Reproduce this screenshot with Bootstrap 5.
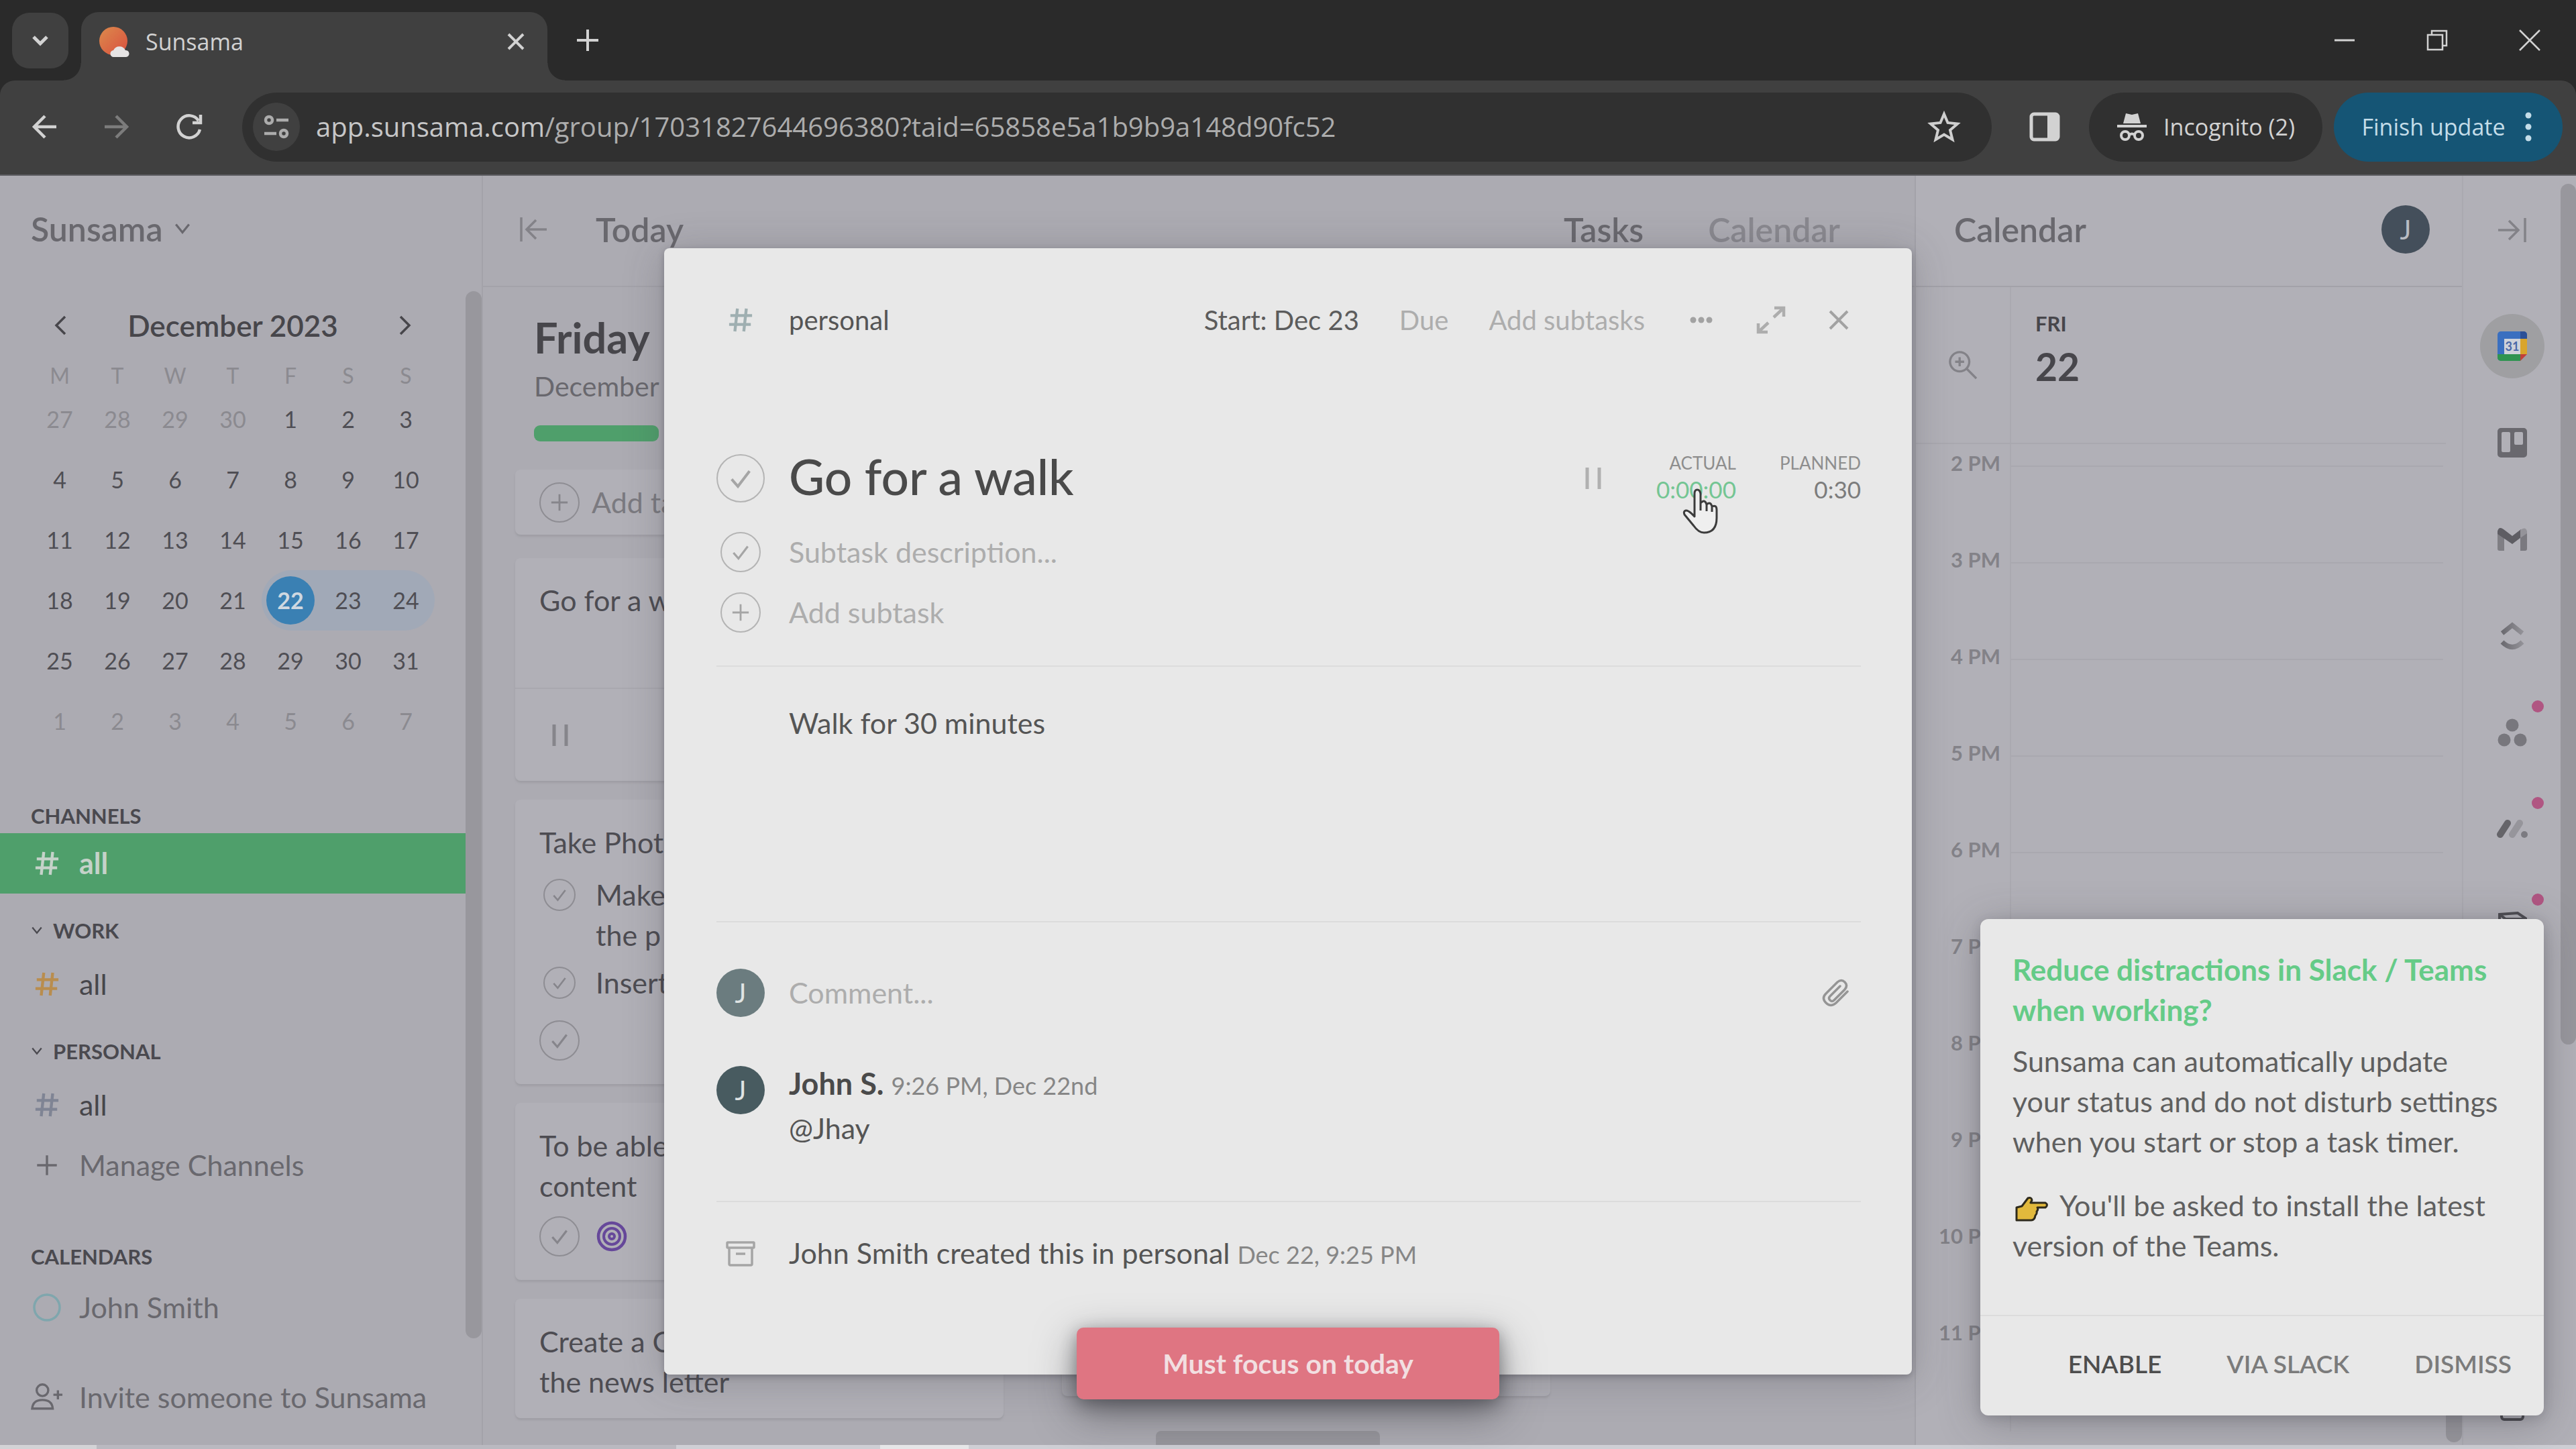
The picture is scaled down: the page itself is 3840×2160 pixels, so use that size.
<!DOCTYPE html>
<html lang="en">
<head>
<meta charset="utf-8">
<meta name="viewport" content="width=device-width, initial-scale=1">
<title>Sunsama</title>
<link href="https://cdn.jsdelivr.net/npm/bootstrap@5.3.0/dist/css/bootstrap.min.css" rel="stylesheet">
<script src="https://cdn.jsdelivr.net/npm/bootstrap@5.3.0/dist/js/bootstrap.bundle.min.js"></script>
<style>
:root{--bar:#2a2a2a;--tool:#404040;--field:#303030;--app:#acabb2;--panel:#b1b0b7;--edge:#a3a2a9;--thumb:#98979d;--ink:#47464b;--soft:#69686e;--faint:#8b8a90;--sheet:#e8e8e8;--rule:#dcdcdc;--green:#4f9f6b}
body{height:100vh;overflow:hidden;background:var(--app);font-family:Lato,"Noto Sans",sans-serif;font-size:43px;line-height:60px;color:var(--ink)}
button,input,a{font:inherit;color:inherit;text-decoration:none}
button{background:none;border:0;padding:0}
svg{display:block;flex:none}
svg:not([fill]){fill:none}
svg:not([stroke]){stroke:currentColor}
.chrome{font-family:"Open Sans","Noto Sans",sans-serif;font-size:34px;color:#d2d2d2;background:var(--bar)}
.strip{height:120px}
.tabsearch{width:84px;height:83px;border-radius:26px;background:var(--tool);margin:0 19px 0 18px}
.browsertab{width:695px;height:102px;border-radius:26px 26px 0 0;background:var(--tool);padding:0 32px 15px 26px}
.browsertab::before,.browsertab::after{content:"";position:absolute;bottom:0;width:26px;height:26px}
.browsertab::before{left:-26px;background:radial-gradient(circle at 0 0,transparent 25px,var(--tool) 26px)}
.browsertab::after{right:-26px;background:radial-gradient(circle at 100% 0,transparent 25px,var(--tool) 26px)}
.newtab{width:120px;height:120px}
.winbtn{width:138px;height:118px}
.toolbar{height:142px;background:var(--tool);border-bottom:2px solid #5d5d61;border-radius:22px 22px 0 0;padding:0 20px 2px 12px}
.toolbtn{width:108px;height:100px}
.omni{height:103px;border-radius:52px;background:var(--field);margin:0 25px;padding:0 46px 0 16px;font-size:40px;color:#acacac}
.siteinfo{width:70px;height:72px;border-radius:50%;background:var(--tool);margin-right:24px}
.chip{height:103px;border-radius:52px}
.chip-inc{width:348px;background:var(--field);margin-left:12px}
.chip-upd{width:341px;background:#155575;color:#c4dde9;margin-left:17px}
.app{min-height:0}
.desk{height:6px;background:linear-gradient(90deg,#d3d3d6 0 144px,#bab9c0 144px 1008px,#cfcfd5 1008px 1312px,#e6e6e8 1312px 1444px,#cfcfd5 1444px)}
.side{width:720px;border-right:2px solid var(--edge)}
.head50{font-size:50px;font-weight:600;color:var(--soft)}
.sidehead{height:172px;padding:0 46px 14px}
.sidebody{width:694px}
.scrollcol{width:24px;background:var(--thumb);border-radius:12px}
.month{height:101px;padding:0 80px;font-size:44px;font-weight:600}
.days{width:602px;margin-left:46px;table-layout:fixed;text-align:center;font-size:34px}
.days th{height:45px;font-size:32px;line-height:30px;font-weight:400;color:var(--faint);padding:10px 0 5px}
.days td{height:90px;padding:0;color:#4f4e54}
.days .off{color:var(--faint)}
.days .span{background:#a1a9b7}
.days .span-a{border-radius:45px 0 0 45px}
.days .span-z{border-radius:0 45px 45px 0}
.now{width:72px;height:72px;border-radius:50%;background:#3a80b3;color:#cfd8e0;font-weight:700}
.sect{font-size:31px;font-weight:700;color:#4a494f;padding-left:46px}
.sect-a{height:52px;margin-top:70px}
.sect-b{height:70px;margin-top:20px;gap:15px}
.sect-c{height:62px;margin-top:60px}
.sidelink{height:90px;padding-left:46px;gap:24px}
.sidelink svg{width:48px}
.sidelink.on{background:var(--green);color:#c5d2c9;font-weight:700}
.sidefoot{height:159px;padding-top:43px}
.muted{color:var(--soft)}
.mainhead{height:166px;padding:0 111px 5px 54px;border-bottom:2px solid var(--edge)}
.board{padding:0 0 0 48px;gap:87px;min-height:0}
.lane{width:728px}
.dayname{font-size:63px;font-weight:700;line-height:74px;padding:38px 28px 0}
.daydate{font-size:41px;padding:6px 28px 0;color:var(--soft)}
.prog{width:186px;height:24px;border-radius:9px;background:var(--green);margin:28px 28px 42px}
.tcard{background:var(--panel);border-radius:8px;box-shadow:0 3px 3px #9f9ea5;padding:34px 36px 35px;margin-bottom:28px;color:#4d4c52}
.tcard-add{height:97px;padding:0 36px;margin-bottom:35px;gap:18px;color:#7b7a80}
.tcard-split{padding:0}
.splittop{height:195px;padding:33px 36px 0;border-bottom:2px solid #a9a8af}
.splitend{height:137px;padding:0 54px}
.sub-a{margin-top:18px;gap:30px;padding-left:6px}
.sub-b{margin-top:11px;gap:30px;padding-left:6px}
.sub-c{margin-top:26px}
.sub-d{margin-top:15px;gap:25px}
.ring{border:2px solid #8e8d93;border-radius:50%;color:#86858b;display:flex;align-items:center;justify-content:center;flex:none}
.r60{width:60px;height:60px}.r48{width:48px;height:48px;margin-top:6px}.r72{width:72px;height:72px}
.hbar{width:334px;height:21px;background:#97969c;border-radius:8px 8px 0 0;margin-left:47%}
.cal{width:816px;background:var(--panel);border-left:2px solid var(--edge)}
.calhead{height:166px;padding:0 48px 4px 57px;border-bottom:2px solid var(--edge)}
.ava{width:72px;height:72px;border-radius:50%;background:#444f5b;color:#b9bcc3;font-size:40px;display:flex;align-items:center;justify-content:center;flex:none}
.gutter{width:142px;border-right:2px solid #aaa9b0}
.calday{height:234px;border-bottom:2px solid #a9a8af}
.dayhead{padding:32px 0 0 36px;font-weight:700}
.dow{font-size:31px;line-height:44px}
.dnum{font-size:57px;line-height:84px}
.hours{height:144px}
.hourlab{font-size:31px;font-weight:700;line-height:40px;color:#838288;padding-right:14px;margin-top:-24px;text-align:right}
.slot{border-top:2px solid #a9a8af;margin-right:4px}
.rail{width:147px;background:var(--panel);border-left:2px solid #aaa9b0}
.railtop{height:182px;padding-bottom:20px}
.railbtn{height:144px}
.gcal{width:96px;height:96px;border-radius:50%;background:#9f9fa2}
.pin{width:18px;height:18px;border-radius:50%;background:#b05682;top:0;right:25px}
.pagebar{width:23px;background:var(--panel);padding-top:12px}
.pagebar div{height:1283px;background:var(--thumb);border-radius:12px}
.sheet-wrap{inset:370px 0 0 0;pointer-events:none}
.sheet{pointer-events:auto;width:1860px;min-height:1679px;background:var(--sheet);border-radius:8px;padding:62px 76px 0 78px;color:#555;box-shadow:0 8px 60px rgba(60,60,70,.28),0 3px 10px rgba(60,60,70,.35)}
.line{gap:36px}
.h90{height:90px}
.icol{width:72px;display:flex;justify-content:center;flex:none}
.sheet .ring{border-color:#b4b4b4;color:#a5a5a5}
.top40{font-size:40px}
.acts{gap:60px;padding-right:18px}
.icons{gap:64px;padding-left:6px}
.pale{color:#adadad}
.titlerow{height:126px;margin-top:128px;margin-bottom:2px}
.tasktitle{font-size:73px;line-height:90px;color:#4a4a4a;margin:0 0 6px}
.ghost{border:0;background:none;outline:0;padding:0;color:#555}
.ghost::placeholder{color:#adadad;opacity:1}
.rule{border-top:2px solid var(--rule)}
.rule-a{margin-top:34px}
.rule-b{margin-bottom:60px}
.rule-c{margin:78px 0 32px}
.posted{margin-top:60px}
.lab{font-size:26px;line-height:32px;color:#8e8e8e}
.val{font-size:35px;line-height:46px;color:#7c7c7c}
.val.run{color:#74c593}
.timers{gap:65px}
.notes{height:379px;padding:54px 0 0 108px}
.hand{left:2508px;top:728px;pointer-events:none}
.meta{font-size:36px;color:#868686}
.poster{font-size:45px;font-weight:700;color:#4a4a4a}
.banner{bottom:74px;left:50%;margin-left:-315px;width:630px;height:107px;background:#df7582;border-radius:10px;color:#f2dfe1;font-size:41px;font-weight:700;box-shadow:0 20px 60px rgba(40,40,45,.5),0 6px 24px rgba(40,40,45,.4)}
.notice{right:48px;bottom:50px;width:840px;background:var(--sheet);border-radius:12px;color:#5f5f5f;box-shadow:0 10px 60px rgba(60,60,70,.35),0 4px 16px rgba(60,60,70,.2)}
.noticebody{padding:45px 56px 73px 48px}
.noticebody h2{font-size:44px;font-weight:700;line-height:60px;color:#65cb87;margin:0 0 17px}
.noticebody p{margin:0 0 35px}
.noticebody p:last-child{margin:0}
.noticefoot{height:150px;gap:97px;padding:0 48px 6px;font-size:37px;font-weight:600;color:#7b7b7b;border-top:2px solid var(--rule)}
</style>
</head>
<body class="d-flex flex-column position-relative">
<svg width="0" height="0" class="position-absolute" aria-hidden="true">
  <symbol id="hash" viewBox="0 0 40 40"><path d="M15 2 11 38M29 2 25 38M4 13H38M2 27H36" stroke-width="4.600"/></symbol>
  <symbol id="tick" viewBox="0 0 30 30"><path d="M5 16 12 24 25 7" stroke-width="3"/></symbol>
  <symbol id="plus" viewBox="0 0 30 30"><path d="M15 2V28M2 15H28" stroke-width="3"/></symbol>
  <symbol id="down" viewBox="0 0 24 24"><path d="M3 6 12 17 21 6" stroke-width="3"/></symbol>
  <symbol id="pause" viewBox="0 0 24 34"><path d="M3 1V33M21 1V33" stroke-width="5"/></symbol>
</svg>

<header class="chrome flex-shrink-0">
  <div class="strip d-flex align-items-center">
    <button class="tabsearch d-flex align-items-center justify-content-center" aria-label="Search tabs"><svg width="28" height="28" viewBox="0 0 28 28"><path d="M4 9 14 19 24 9" stroke-width="5"/></svg></button>
    <div class="browsertab d-flex align-items-center position-relative align-self-end">
      <svg width="46" height="46" viewBox="0 0 46 46" stroke="none"><defs><linearGradient id="sun" x1="0" y1="0" x2="1" y2="1"><stop offset="0" stop-color="#dc8a4c"/><stop offset="1" stop-color="#d9503f"/></linearGradient></defs><circle cx="22" cy="22" r="21" fill="url(#sun)"/><path d="M23 46a5 5 0 0 1-1-10 10 10 0 0 1 18 0 5 5 0 0 1 1 10z" fill="#e6e4e4"/></svg>
      <span class="ms-4">Sunsama</span>
      <button class="ms-auto" aria-label="Close tab"><svg width="30" height="30" viewBox="0 0 30 30"><path d="M4 4 26 26M26 4 4 26" stroke-width="4"/></svg></button>
    </div>
    <button class="newtab d-flex align-items-center justify-content-center" aria-label="New tab"><svg width="34" height="34" viewBox="0 0 34 34"><path d="M17 1V33M1 17H33" stroke-width="4"/></svg></button>
    <div class="d-flex ms-auto">
      <button class="winbtn d-flex align-items-center justify-content-center" aria-label="Minimize"><svg width="32" height="32" viewBox="0 0 32 32"><path d="M1 16H31" stroke-width="3"/></svg></button>
      <button class="winbtn d-flex align-items-center justify-content-center" aria-label="Restore"><svg width="32" height="32" viewBox="0 0 32 32"><path d="M2 8H24V30H2zM8 8V2H30V24H24" stroke-width="2.5"/></svg></button>
      <button class="winbtn d-flex align-items-center justify-content-center" aria-label="Close"><svg width="32" height="32" viewBox="0 0 32 32"><path d="M1 1 31 31M31 1 1 31" stroke-width="2.5"/></svg></button>
    </div>
  </div>
  <div class="toolbar d-flex align-items-center">
    <button class="toolbtn d-flex align-items-center justify-content-center" aria-label="Back"><svg width="38" height="38" viewBox="0 0 38 38"><path d="M37 19H4M20 3 4 19 20 35" stroke-width="4.5"/></svg></button>
    <button class="toolbtn d-flex align-items-center justify-content-center" aria-label="Forward" disabled><svg width="38" height="38" viewBox="0 0 38 38" stroke="#7c7c7c"><path d="M1 19H34M18 3 34 19 18 35" stroke-width="4.5"/></svg></button>
    <button class="toolbtn d-flex align-items-center justify-content-center" aria-label="Reload"><svg width="40" height="40" viewBox="0 0 40 40"><path d="M34 11A16.500 16.500 0 1 0 36 24M37 2V14H25" stroke-width="4.500"/></svg></button>
    <div class="omni d-flex align-items-center flex-grow-1">
      <button class="siteinfo d-flex align-items-center justify-content-center" aria-label="Site information"><svg width="38" height="36" viewBox="0 0 38 36" stroke-width="4.500"><circle cx="8" cy="8" r="5"/><path d="M19 8H37M1 28H19"/><circle cx="30" cy="28" r="5"/></svg></button>
      <div role="textbox" aria-label="Address" class="text-nowrap"><span class="text-light text-opacity-75">app.sunsama.com</span>/group/17031827644696380?taid=65858e5a1b9b9a148d90fc52</div>
      <button class="ms-auto" aria-label="Bookmark"><svg width="50" height="50" viewBox="0 0 50 50" stroke="#cfcfcf"><path d="M25 6 30.500 19 45 20.500 34 30 37.500 44 25 36.500 12.500 44 16 30 5 20.500 19.500 19z" stroke-width="4"/></svg></button>
    </div>
    <button class="toolbtn d-flex align-items-center justify-content-center" aria-label="Side panel"><svg width="46" height="44" viewBox="0 0 46 44"><rect x="3" y="3" width="40" height="38" rx="4" stroke-width="5"/><path d="M27 3H43V41H27z" fill="currentColor" stroke="none"/></svg></button>
    <button class="chip chip-inc d-flex align-items-center justify-content-center"><svg class="me-4" width="46" height="46" viewBox="0 0 46 46" stroke="none" fill="#d2d2d2"><path d="M14 3 23 5 32 3 36 18H10zM1 20H45V24H1z"/><g fill="none" stroke="#d2d2d2" stroke-width="4"><circle cx="13" cy="36" r="6"/><circle cx="33" cy="36" r="6"/><path d="M19 35Q23 32 27 35"/></g></svg>Incognito (2)</button>
    <button class="chip chip-upd d-flex align-items-center justify-content-center">Finish update<svg class="ms-4" width="20" height="46" viewBox="0 0 20 46" stroke="none" fill="#c4dde9"><circle cx="10" cy="6" r="4.500"/><circle cx="10" cy="23" r="4.500"/><circle cx="10" cy="40" r="4.500"/></svg></button>
  </div>
</header>

<div class="app d-flex flex-grow-1 overflow-hidden">
  <aside class="side d-flex flex-column flex-shrink-0">
    <button class="sidehead head50 d-flex align-items-center flex-shrink-0">Sunsama<svg class="ms-3" width="26" height="26"><use href="#down"/></svg></button>
    <div class="d-flex flex-grow-1">
      <nav class="sidebody">
        <div class="month d-flex align-items-center justify-content-between">
          <button aria-label="Previous month"><svg width="20" height="30" viewBox="0 0 20 30"><path d="M17 2 4 15 17 28" stroke-width="3.500"/></svg></button>
          <span>December 2023</span>
          <button aria-label="Next month"><svg width="20" height="30" viewBox="0 0 20 30"><path d="M3 2 16 15 3 28" stroke-width="3.500"/></svg></button>
        </div>
        <table class="days">
          <thead><tr><th>M</th><th>T</th><th>W</th><th>T</th><th>F</th><th>S</th><th>S</th></tr></thead>
          <tbody>
          <tr><td class="off">27</td><td class="off">28</td><td class="off">29</td><td class="off">30</td><td>1</td><td>2</td><td>3</td></tr>
          <tr><td>4</td><td>5</td><td>6</td><td>7</td><td>8</td><td>9</td><td>10</td></tr>
          <tr><td>11</td><td>12</td><td>13</td><td>14</td><td>15</td><td>16</td><td>17</td></tr>
          <tr><td>18</td><td>19</td><td>20</td><td>21</td><td class="span span-a"><button class="now">22</button></td><td class="span">23</td><td class="span span-z">24</td></tr>
          <tr><td>25</td><td>26</td><td>27</td><td>28</td><td>29</td><td>30</td><td>31</td></tr>
          <tr><td class="off">1</td><td class="off">2</td><td class="off">3</td><td class="off">4</td><td class="off">5</td><td class="off">6</td><td class="off">7</td></tr>
          </tbody>
        </table>
        <div class="sect sect-a d-flex align-items-center">CHANNELS</div>
        <a href="#" class="sidelink on d-flex align-items-center"><svg height="38"><use href="#hash"/></svg>all</a>
        <div class="sect sect-b d-flex align-items-center"><svg width="18" height="18"><use href="#down"/></svg>WORK</div>
        <a href="#" class="sidelink d-flex align-items-center"><svg height="38" stroke="#b98d4e"><use href="#hash"/></svg>all</a>
        <div class="sect sect-b d-flex align-items-center"><svg width="18" height="18"><use href="#down"/></svg>PERSONAL</div>
        <a href="#" class="sidelink d-flex align-items-center"><svg height="38" stroke="#7f8494"><use href="#hash"/></svg>all</a>
        <a href="#" class="sidelink muted d-flex align-items-center"><svg height="34"><use href="#plus"/></svg>Manage Channels</a>
        <div class="sect sect-c d-flex align-items-center">CALENDARS</div>
        <a href="#" class="sidelink muted d-flex align-items-center"><svg height="44" viewBox="0 0 44 44" stroke="#7fa6ad" stroke-width="3.500"><circle cx="22" cy="22" r="19"/></svg>John Smith</a>
      </nav>
      <div class="scrollcol"></div>
    </div>
    <div class="sidefoot flex-shrink-0"><a href="#" class="sidelink muted d-flex align-items-center"><svg height="44" viewBox="0 0 50 44" stroke-width="3.500"><circle cx="18" cy="11" r="9"/><path d="M2 39.500Q3 26 18 26T34 39.500zM42 11V25M35 18H49"/></svg>Invite someone to Sunsama</a></div>
  </aside>

  <main class="d-flex flex-column flex-grow-1 overflow-hidden">
    <div class="mainhead head50 d-flex align-items-center flex-shrink-0">
      <button aria-label="Collapse" class="me-5 pe-4"><svg width="42" height="38" viewBox="0 0 42 38" stroke="#838288"><path d="M3 1V37M41 19H11M25 5 11 19 25 33" stroke-width="3.500"/></svg></button>
      <span>Today</span>
      <a href="#" class="ms-auto me-5">Tasks</a><a href="#" class="ms-5" style="color:#89888f">Calendar</a>
    </div>
    <div class="board d-flex flex-grow-1 overflow-hidden">
      <section class="lane flex-shrink-0">
        <div class="dayname">Friday</div>
        <div class="daydate">December 22</div>
        <div class="prog"></div>
        <button class="tcard tcard-add d-flex align-items-center w-100"><span class="ring r60"><svg width="28" height="28"><use href="#plus"/></svg></span>Add task</button>
        <article class="tcard tcard-split">
          <div class="splittop">Go for a walk</div>
          <div class="splitend d-flex align-items-center"><svg width="26" height="34" stroke="#86858b"><use href="#pause"/></svg></div>
        </article>
        <article class="tcard">
          <div>Take Photos</div>
          <div class="d-flex sub-a"><span class="ring r48"><svg width="26" height="26"><use href="#tick"/></svg></span><span>Make<br>the p</span></div>
          <div class="d-flex sub-b"><span class="ring r48"><svg width="26" height="26"><use href="#tick"/></svg></span><span>Insert</span></div>
          <span class="ring r60 sub-c"><svg width="32" height="32"><use href="#tick"/></svg></span>
        </article>
        <article class="tcard">
          <div>To be able<br>content</div>
          <div class="d-flex align-items-center sub-d"><span class="ring r60"><svg width="32" height="32"><use href="#tick"/></svg></span><svg width="46" height="46" viewBox="0 0 46 46" stroke="#66489a"><circle cx="23" cy="23" r="20" stroke-width="4.500"/><circle cx="23" cy="23" r="12" stroke-width="4"/><circle cx="23" cy="23" r="4" stroke-width="4"/></svg></div>
        </article>
        <article class="tcard pb-4">Create a C<br>the news letter</article>
      </section>
      <section class="lane flex-shrink-0 pb-5 d-flex"><div class="tcard w-100 mb-1"></div></section>
    </div>
    <div class="hbar flex-shrink-0"></div>
  </main>

  <section class="cal d-flex flex-column flex-shrink-0">
    <div class="calhead head50 d-flex align-items-center justify-content-between flex-shrink-0"><span>Calendar</span><span class="ava fw-normal">J</span></div>
    <div class="calday d-flex flex-shrink-0 me-4">
      <div class="gutter d-flex align-items-center justify-content-center"><svg width="44" height="44" viewBox="0 0 46 46" stroke="#838288" stroke-width="3.500"><circle cx="18" cy="18" r="15"/><path d="M29 29 44 44M18 11V25M11 18H25"/></svg></div>
      <div class="dayhead"><div class="dow">FRI</div><div class="dnum">22</div></div>
    </div>
    <div class="d-flex flex-grow-1 overflow-hidden">
      <div class="flex-grow-1">
        <div class="gutter" style="height:32px"></div>
        <div class="hours d-flex"><div class="gutter"><div class="hourlab">2 PM</div></div><div class="slot flex-grow-1"></div></div>
        <div class="hours d-flex"><div class="gutter"><div class="hourlab">3 PM</div></div><div class="slot flex-grow-1"></div></div>
        <div class="hours d-flex"><div class="gutter"><div class="hourlab">4 PM</div></div><div class="slot flex-grow-1"></div></div>
        <div class="hours d-flex"><div class="gutter"><div class="hourlab">5 PM</div></div><div class="slot flex-grow-1"></div></div>
        <div class="hours d-flex"><div class="gutter"><div class="hourlab">6 PM</div></div><div class="slot flex-grow-1"></div></div>
        <div class="hours d-flex"><div class="gutter"><div class="hourlab">7 PM</div></div><div class="slot flex-grow-1"></div></div>
        <div class="hours d-flex"><div class="gutter"><div class="hourlab">8 PM</div></div><div class="slot flex-grow-1"></div></div>
        <div class="hours d-flex"><div class="gutter"><div class="hourlab">9 PM</div></div><div class="slot flex-grow-1"></div></div>
        <div class="hours d-flex"><div class="gutter"><div class="hourlab">10 PM</div></div><div class="slot flex-grow-1"></div></div>
        <div class="hours d-flex"><div class="gutter"><div class="hourlab">11 PM</div></div><div class="slot flex-grow-1"></div></div>
      </div>
      <div class="scrollcol mt-auto mb-1" style="height:300px"></div>
    </div>
  </section>

  <nav class="rail flex-shrink-0">
    <button class="railtop w-100 d-flex align-items-center justify-content-center" aria-label="Collapse panel"><svg width="44" height="38" viewBox="0 0 44 38" stroke="#838288"><path d="M41 1V37M1 19H31M17 5 31 19 17 33" stroke-width="3.500"/></svg></button>
    <button class="railbtn w-100 d-flex align-items-center justify-content-center" aria-label="Google Calendar"><span class="gcal d-flex align-items-center justify-content-center"><svg width="44" height="44" viewBox="0 0 44 44" stroke="none"><rect width="44" height="44" rx="5" fill="#3a6fc0"/><path d="M34 0h5a5 5 0 0 1 5 5v6H34z" fill="#2b5097"/><path d="M34 11H44V34H34z" fill="#d9a52c"/><path d="M0 34H34V44H5a5 5 0 0 1-5-5z" fill="#2f9450"/><path d="M34 34H44V44H34z" fill="#9f9fa2"/><path d="M34 34H44L34 44z" fill="#c2403a"/><rect x="10" y="11" width="24" height="23" fill="#ced2da"/><text x="22" y="29" font-family="Lato" font-size="18" font-weight="700" text-anchor="middle" fill="#4a68a8">31</text></svg></span></button>
    <button class="railbtn w-100 d-flex align-items-center justify-content-center" aria-label="Trello"><svg width="44" height="44" viewBox="0 0 44 44" stroke="none" fill="#69686e"><path fill-rule="evenodd" d="M5 0H39a5 5 0 0 1 5 5V39a5 5 0 0 1-5 5H5a5 5 0 0 1-5-5V5a5 5 0 0 1 5-5zM8 6Q6 6 6 8V34Q6 36 8 36H17Q19 36 19 34V8Q19 6 17 6zM27 6Q25 6 25 8V23Q25 25 27 25H36Q38 25 38 23V8Q38 6 36 6z"/></svg></button>
    <button class="railbtn w-100 d-flex align-items-center justify-content-center" aria-label="Gmail"><svg width="44" height="34" viewBox="0 0 44 34" stroke="none"><path d="M0 6H10V34H3a3 3 0 0 1-3-3z" fill="#7f7e84"/><path d="M34 6H44V31a3 3 0 0 1-3 3H34z" fill="#7a797f"/><path d="M0 5Q2-3 9 2L22 12 35 2V14L22 24 0 9z" fill="#5e5d63"/><path d="M34 3Q42-3 44 5V8L34 15z" fill="#949399"/></svg></button>
    <button class="railbtn w-100 d-flex align-items-center justify-content-center" aria-label="ClickUp"><svg width="36" height="42" viewBox="0 0 36 42" stroke-width="7"><defs><linearGradient id="cu"><stop offset="0" stop-color="#6b6a70"/><stop offset="1" stop-color="#929197"/></linearGradient></defs><path d="M3 17 18 5 33 17" stroke="url(#cu)"/><path d="M3 30Q18 45 33 30" stroke="url(#cu)"/></svg></button>
    <button class="railbtn w-100 d-flex align-items-center justify-content-center position-relative" aria-label="Asana"><svg width="44" height="42" viewBox="0 0 44 42" stroke="none" fill="#78777d"><circle cx="22" cy="10" r="9.500"/><circle cx="10" cy="32" r="9.500"/><circle cx="34" cy="32" r="9.500"/></svg><span class="pin position-absolute mt-4"></span></button>
    <button class="railbtn w-100 d-flex align-items-center justify-content-center position-relative" aria-label="monday.com"><svg width="48" height="30" viewBox="0 0 48 30" stroke-width="10" stroke-linecap="round"><path d="M6 23 17 6" stroke="#656469"/><path d="M24 23 35 6" stroke="#96959b"/><circle cx="42" cy="23" r="5" fill="#7c7b81" stroke="none"/></svg><span class="pin position-absolute mt-4"></span></button>
    <button class="railbtn w-100 d-flex align-items-center justify-content-center position-relative" aria-label="Notion"><svg width="44" height="44" viewBox="0 0 44 44" stroke="#4d4c52" stroke-width="4"><path d="M3 5 30 3 42 11V41H10L3 34zM3 5 12 12H42"/></svg><span class="pin position-absolute mt-4"></span></button>
    <div class="railbtn"></div><div class="railbtn"></div><div class="railbtn"></div><div class="railbtn"></div>
    <button class="railbtn w-100 d-flex align-items-center justify-content-center" aria-label="More"><svg width="36" height="36" viewBox="0 0 36 36"><rect x="2" y="2" width="32" height="32" rx="4" stroke-width="4"/></svg></button>
  </nav>
  <div class="pagebar flex-shrink-0"><div></div></div>
</div>
<div class="desk flex-shrink-0"></div>

<div class="sheet-wrap position-absolute d-flex justify-content-center align-items-start">
  <div class="sheet" role="dialog" aria-label="Go for a walk">
    <div class="line h90 d-flex align-items-center top40">
      <span class="icol"><svg width="40" height="38" stroke="#9fafb1"><use href="#hash"/></svg></span>
      <span>personal</span>
      <div class="acts ms-auto d-flex align-items-center pale">
        <button style="color:#5c5c5c">Start: Dec 23</button>
        <button>Due</button>
        <button>Add subtasks</button>
        <div class="icons d-flex align-items-center">
          <button aria-label="More"><svg width="36" height="12" viewBox="0 0 36 12" stroke="none" fill="#a2a2a2"><circle cx="6" cy="6" r="4.500"/><circle cx="18" cy="6" r="4.500"/><circle cx="30" cy="6" r="4.500"/></svg></button>
          <button aria-label="Expand"><svg width="44" height="42" viewBox="0 0 44 42" stroke-width="4.500"><path d="M26 17 41 3M27 3H41V16M18 25 3 39M3 26V39H17"/></svg></button>
          <button aria-label="Close"><svg width="30" height="30" viewBox="0 0 30 30" stroke="#a2a2a2"><path d="M2 2 28 28M28 2 2 28" stroke-width="4"/></svg></button>
        </div>
      </div>
    </div>
    <div class="line titlerow d-flex align-items-center">
      <span class="ring r72"><svg width="40" height="40"><use href="#tick"/></svg></span>
      <h1 class="tasktitle">Go for a walk</h1>
      <div class="timers ms-auto d-flex align-items-center text-end">
        <button class="me-3" aria-label="Pause timer" style="color:#b0b0b0"><svg width="26" height="34"><use href="#pause"/></svg></button>
        <div><div class="lab">ACTUAL</div><div class="val run">0:00:00</div></div>
        <div><div class="lab">PLANNED</div><div class="val">0:30</div></div>
      </div>
    </div>
    <div class="line h90 d-flex align-items-center"><span class="icol"><span class="ring r60"><svg width="32" height="32"><use href="#tick"/></svg></span></span><input class="ghost flex-grow-1" type="text" placeholder="Subtask description..." aria-label="Subtask description"></div>
    <div class="line h90 d-flex align-items-center"><span class="icol"><span class="ring r60"><svg width="28" height="28"><use href="#plus"/></svg></span></span><button class="pale">Add subtask</button></div>
    <div class="rule rule-a"></div>
    <div class="notes">Walk for 30 minutes</div>
    <div class="rule rule-b"></div>
    <div class="line h90 d-flex align-items-center">
      <span class="ava" style="background:#6b7c7f;color:#e0e4e4">J</span>
      <input class="ghost flex-grow-1" type="text" placeholder="Comment..." aria-label="Comment">
      <button class="me-3" aria-label="Attach file"><svg width="42" height="44" viewBox="0 0 42 44" stroke="#959595" stroke-width="3.500"><path d="M38 20 21 37Q13 44 6 37T6 23L23 6Q29 1 34 6T34 17L18 33Q15 36 12 33T12 27L27 12" stroke-linecap="round"/></svg></button>
    </div>
    <div class="line d-flex posted">
      <span class="ava mt-1" style="background:#485b60;color:#e0e4e4">J</span>
      <div><div><span class="poster">John S.</span> <span class="meta">9:26 PM, Dec 22nd</span></div><div class="pt-1">@Jhay</div></div>
    </div>
    <div class="rule rule-c"></div>
    <div class="line h90 d-flex align-items-center">
      <span class="icol"><svg width="44" height="38" viewBox="0 0 44 38" stroke="#a5a5a5" stroke-width="3.500"><rect x="2" y="2" width="40" height="8" rx="1"/><path d="M5 10V34Q5 36 7 36H37Q39 36 39 34V10M15 19H29"/></svg></span>
      <div>John Smith created this in personal <span class="meta">Dec 22, 9:25 PM</span></div>
    </div>
  </div>
</div>

<svg class="hand position-absolute" width="54" height="68" viewBox="0 0 54 68" stroke="#3c3c3c" stroke-width="3" fill="#efefef" stroke-linejoin="round"><path d="M18 42V8Q18 2 22 2T27 8V22Q33 15 36 24 42 19 44 27 51 24 51 32V44Q51 66 32 66 24 66 17 56L3 39Q1 34 5 33 9 32 18 42zM27 22V33M36 24V34M44 27V35"/></svg>

<button class="banner position-absolute">Must focus on today</button>

<div class="notice position-absolute" role="alertdialog" aria-label="Reduce distractions">
  <div class="noticebody">
    <h2>Reduce distractions in Slack / Teams when working?</h2>
    <p>Sunsama can automatically update your status and do not disturb settings when you start or stop a task timer.</p>
    <p><svg class="d-inline-block me-3 ms-1" width="50" height="38" viewBox="0 0 50 38" stroke="#2e2a1c" stroke-width="3" fill="#e2b93c" stroke-linejoin="round"><path d="M2 17 10 15 19 3Q24 1 25 6L23 10H45Q50 13 45 17H33Q35 20 32 23 33 26 30 29 29 36 24 36H2z"/></svg>You'll be asked to install the latest version of the Teams.</p>
  </div>
  <div class="noticefoot d-flex align-items-center justify-content-end"><button style="color:#4d4d4d">ENABLE</button><button>VIA SLACK</button><button>DISMISS</button></div>
</div>
</body>
</html>
